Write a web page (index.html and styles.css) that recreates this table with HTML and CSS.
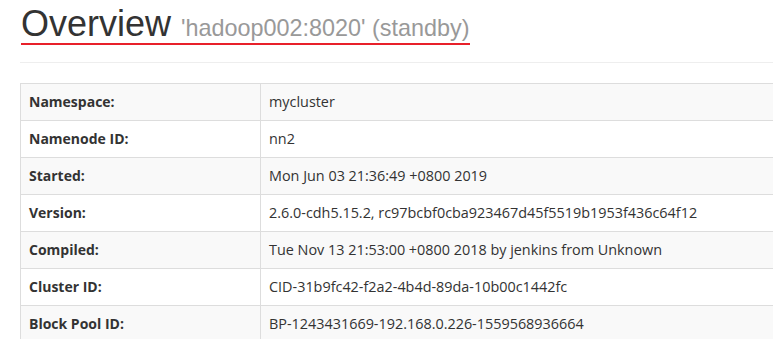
FILE: index.html
```html
<!DOCTYPE html>
<html>
<head>
<meta charset="utf-8">
<link rel="stylesheet" href="styles.css">
</head>
<body>
<div class="container">
  <div class="page-header">
    <h1 class="title"><span class="mark">Overview <small>'hadoop002:8020' (standby)</small></span></h1>
  </div>
  <table class="table">
    <tbody>
      <tr><th>Namespace:</th><td>mycluster</td></tr>
      <tr><th>Namenode ID:</th><td>nn2</td></tr>
      <tr><th>Started:</th><td>Mon Jun 03 21:36:49 +0800 2019</td></tr>
      <tr><th>Version:</th><td>2.6.0-cdh5.15.2, rc97bcbf0cba923467d45f5519b1953f436c64f12</td></tr>
      <tr><th>Compiled:</th><td>Tue Nov 13 21:53:00 +0800 2018 by jenkins from Unknown</td></tr>
      <tr><th>Cluster ID:</th><td>CID-31b9fc42-f2a2-4b4d-89da-10b00c1442fc</td></tr>
      <tr><th>Block Pool ID:</th><td>BP-1243431669-192.168.0.226-1559568936664</td></tr>
    </tbody>
  </table>
</div>
</body>
</html>
```
FILE: styles.css
```css
html, body {
  margin: 0;
  padding: 0;
  overflow: hidden;
  background: #fff;
}
body {
  font-family: "Open Sans", "Noto Sans", sans-serif;
  font-size: 14px;
  line-height: 1.42857;
  color: #333;
}
.container {
  width: 1100px;
  padding: 0 20px;
}
.page-header {
  padding-bottom: 9px;
  border-bottom: 1px solid #eee;
  margin-bottom: 20px;
}
.title {
  margin: 4px 0 8px 0;
  font-family: "Liberation Sans", Arial, sans-serif;
  font-size: 36px;
  font-weight: 400;
  line-height: 39px;
  color: #333;
}
.mark {
  display: inline-block;
  margin-left: 1px;
  border-bottom: 2px solid #e8202a;
  height: 39px;
  line-height: 39px;
}
.title small {
  font-size: 65%;
  color: #999;
  font-weight: 400;
}
.table {
  width: 100%;
  border-collapse: collapse;
  border: 1px solid #ddd;
}
.table th, .table td {
  padding: 8px;
  border: 1px solid #ddd;
  text-align: left;
  vertical-align: top;
  height: 20px;
  line-height: 20px;
}
.table th {
  width: 223px;
  font-weight: 700;
}
.table td {
  font-size: 14.4px;
}
.table tr:nth-child(odd) {
  background: #f9f9f9;
}
```
